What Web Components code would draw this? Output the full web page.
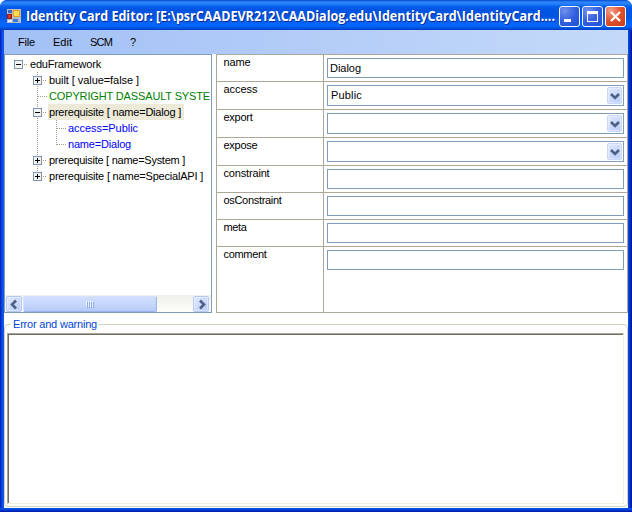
<!DOCTYPE html>
<html lang="en"><head><meta charset="utf-8"><title>Identity Card Editor</title>
<style>html,body{margin:0;width:632px;height:512px;overflow:hidden;background:#fff}</style></head>
<body><card-window></card-window>
<script>
const define=(name,markup,setup)=>customElements.define(name,class extends HTMLElement{
  connectedCallback(){
    if(this.shadowRoot)return;
    const t=document.createElement('template');
    t.innerHTML='<style>*{box-sizing:border-box}:host{box-sizing:border-box}svg{display:block}</style>'+(typeof markup==='function'?markup(this):markup);
    this.attachShadow({mode:'open'}).append(t.content.cloneNode(true));
    if(setup)setup(this);
  }
});
/* A label fitted to a width: by letter spacing, or by horizontal scale when "scale" is set. */
define('fit-label',e=>`<style>:host{display:block;white-space:pre;width:${e.getAttribute('w')}px;flex:none}span{display:inline-block;transform-origin:0 0}</style><span>${e.getAttribute('text')}</span>`,e=>{
  const s=e.shadowRoot.querySelector('span'),w=+e.getAttribute('w'),n=e.getAttribute('text').length,cur=s.getBoundingClientRect().width;
  if(e.hasAttribute('scale'))s.style.transform=`scaleX(${w/cur})`;
  else if(n>1)s.style.letterSpacing=(w+1-cur)/n+'px';
});
define('caption-button',e=>{
  const k=e.getAttribute('kind'),c=k==='close';
  const g={min:'<rect x="5" y="13" width="7" height="3" fill="#fff"/>',
    max:'<path d="M5.500 5v11M15.500 5v11M5 15.500h11" stroke="#fff" fill="none"/><rect x="5" y="5" width="11" height="3" fill="#fff"/>',
    close:'<path d="M6 6l9 9M15 6l-9 9" stroke="#fff" stroke-width="2.300" fill="none"/>'}[k];
  return `<style>:host{display:block;width:21px;height:21px;border:1px solid ${c?'#fff':'#f4f7ff'};border-radius:3px;background:${c?'radial-gradient(circle at 25% 20%,#f0a088,#e0502c 50%,#c83c18)':'radial-gradient(circle at 25% 20%,#7090ec,#3560e0 50%,#2150d4)'}}svg{margin:-1px}</style><svg width="21" height="21">${g}</svg>`;
});
define('title-bar',`<style>
:host{display:flex;height:30px;border-radius:7px 7px 0 0;padding:6px 4px 0 6px;background:linear-gradient(#0848c8 0,#2b85ff 2px,#2a80fa 4px,#0764ee 6px,#0055e3 9px,#0054e2 17px,#0262fa 22px,#0367ff 26px,#0153dd 28px,#003ecc 30px)}
.icon{margin:3px 5px 0 1px;width:14px}
fit-label{font:bold 13.500px/21px "Open Sans","Noto Sans",sans-serif;color:#fff;text-shadow:1px 1px #0a2a90}
.b{display:flex;gap:2px;margin-left:4px}</style>
<svg class="icon" width="14" height="14"><rect width="14" height="14" fill="#b8bcc4"/><rect x="1" y="1" width="4" height="3" fill="#3867c0"/><rect x="0.500" y="5.500" width="4" height="4" fill="#d93120" stroke="#8d1d18"/><rect x="6.500" y="1.500" width="6" height="6" fill="#ffdc54" stroke="#e8a020"/><rect x="1" y="11" width="4" height="2" fill="#e8eef8"/><rect x="6" y="10" width="5" height="3" fill="#3c78d8"/></svg>
<fit-label scale w="529" text="Identity Card Editor: [E:\\psrCAADEVR212\\CAADialog.edu\\IdentityCard\\IdentityCard...."></fit-label>
<div class="b"><caption-button kind="min"></caption-button><caption-button kind="max"></caption-button><caption-button kind="close"></caption-button></div>`);
define('menu-bar',`<style>:host{display:flex;gap:19px;height:24px;padding:4px 14px;background:linear-gradient(90deg,#a2c0f6,#c5daf9)}</style>
<fit-label w="16" text="File"></fit-label><fit-label w="18" text="Edit"></fit-label><fit-label w="21" text="SCM"></fit-label><fit-label w="5" text="?"></fit-label>`);
/* Tree row: "cells" has one letter per indent. p/q = plus box, m/r = minus box, t = tee, l = last, v = line, e = empty */
define('tree-row',e=>{
  const box=(p,top,bot)=>`${top?'<path class="d" d="M9.500 0v4"/>':''}${bot?'<path class="d" d="M9.500 14v2"/>':''}<path class="d" d="M15 8.500h4"/><rect x="5.500" y="4.500" width="8" height="8" rx="1" fill="#f4f2ec" stroke="#7898b5"/><path d="M7 8.500h5${p?'M9.500 6v5':''}" stroke="#000"/>`;
  const g={p:box(1,1,1),q:box(1,1,0),m:box(0,1,1),r:box(0,0,0),t:'<path class="d" d="M9.500 0v16M10 8.500h9"/>',l:'<path class="d" d="M9.500 0v9M10 8.500h9"/>',v:'<path class="d" d="M9.500 0v16"/>',e:''};
  return `<style>:host{display:flex;height:16px}.d{stroke:#a39f90;stroke-dasharray:1 1;fill:none}svg{flex:none}
  fit-label{color:${e.getAttribute('color')||'#000'};padding:0 2px 0 1px;margin-left:1px;box-sizing:content-box;${e.hasAttribute('selected')?'background:#ece9d8;padding-right:4px':''}}</style>${[...e.getAttribute('cells')].map(c=>`<svg width="19" height="16" shape-rendering="crispEdges">${g[c]}</svg>`).join('')}<fit-label w="${e.getAttribute('w')}" text="${e.getAttribute('text')}"></fit-label>`;
});
define('xp-button',e=>{
  const d={left:'M10 4.500l-4 4 4 4',right:'M7 4.500l4 4-4 4',down:'M4 7l4 4 4-4'}[e.getAttribute('dir')],dn=e.getAttribute('dir')==='down';
  return `<style>:host{display:block;width:${dn?15:16}px;height:${dn?17:16}px;border:1px solid ${dn?'#c8d6fa':'#b4c8f4'};border-radius:2px;background:linear-gradient(135deg,#e0e9ff,#b8cbf8);flex:none;box-shadow:inset 0 0 0 1px #ffffff66}svg{margin:-1px}</style><svg width="16" height="17"><path d="${d}" fill="none" stroke="#4d6185" stroke-width="2.600"/></svg>`;
});
define('h-scrollbar',`<style>:host{display:flex;height:17px;padding:1px 1px 0;background:linear-gradient(#f0f0ea,#fefefb)}
.t{width:134px;height:16px;margin:0 36px 0 1px;border:1px solid #98b4ea;border-top-color:#d4e0fc;border-left-color:#d4e0fc;border-radius:2px;background:linear-gradient(#d0dfff,#c4d5fc 60%,#b6caf6);display:flex;justify-content:center;padding-top:4px}</style>
<xp-button dir="left"></xp-button><div class="t"><svg width="9" height="7" shape-rendering="crispEdges"><path d="M.5 0v6M2.500 0v6M4.500 0v6M6.500 0v6" stroke="#eef4ff"/><path d="M1.500 1v6M3.500 1v6M5.500 1v6M7.500 1v6" stroke="#8cabed"/></svg></div><xp-button dir="right"></xp-button>`);
define('tree-panel',`<style>:host{display:flex;flex-direction:column;width:208px;height:259px;border:1px solid #7f9db9;background:#fff}
.rows{flex:1;padding:1px 2px 0 4px;overflow:hidden}</style>
<div class="rows">
<tree-row cells="r" w="70" text="eduFramework"></tree-row>
<tree-row cells="ep" w="89" text="built [ value=false ]"></tree-row>
<tree-row cells="et" color="#008000" w="160" text="COPYRIGHT DASSAULT SYSTE"></tree-row>
<tree-row cells="em" selected w="131" text="prerequisite [ name=Dialog ]"></tree-row>
<tree-row cells="evt" color="#0000ff" w="69" text="access=Public"></tree-row>
<tree-row cells="evl" color="#0000ff" w="62" text="name=Dialog"></tree-row>
<tree-row cells="ep" w="135" text="prerequisite [ name=System ]"></tree-row>
<tree-row cells="eq" w="153" text="prerequisite [ name=SpecialAPI ]"></tree-row>
</div><h-scrollbar></h-scrollbar>`);
define('property-row',e=>{
  const s=e.hasAttribute('select'),v=e.getAttribute('value');
  return `<style>:host{display:grid;grid-template-columns:107px 1fr;border-bottom:1px solid #aca899;height:${s?28:27}px}
:host([last]){height:66px}.k{border-right:1px solid #aca899;padding:0 0 0 6.500px}.k fit-label{margin-top:-1px}.v{padding:3px 3px 0}
.f{height:${s?21:20}px;border:1px solid #7f9db9;background:#fff;display:flex;justify-content:space-between;padding:${s?'1px 1px 0 3px':'1px 2px'}}</style>
<div class="k"><fit-label w="${e.getAttribute('w')}" text="${e.getAttribute('name')}"></fit-label></div><div class="v"><div class="f">${v?`<fit-label w="30" text="${v}"></fit-label>`:'<i></i>'}${s?'<xp-button dir="down"></xp-button>':''}</div></div>`;
});
define('property-grid',`<style>:host{display:block;width:412px;height:259px;border:1px solid #aca899;border-bottom:0;background:#fff}</style>
<property-row name="name" w="26" value="Dialog"></property-row><property-row select name="access" w="33" value="Public"></property-row>
<property-row select name="export" w="28"></property-row><property-row select name="expose" w="33"></property-row>
<property-row name="constraint" w="45"></property-row><property-row name="osConstraint" w="57"></property-row>
<property-row name="meta" w="22"></property-row><property-row last name="comment" w="42"></property-row>`);
define('error-group',`<style>:host{display:block;height:191px}
fieldset{margin:0;min-width:0;height:191px;border:1px solid #d0d0bf;border-radius:4px;padding:0 3px 0 2px}
legend{padding:0 2px 0 3px;margin-left:3px;height:16px;color:#0046d5}
.box{height:171px;margin-top:1px;border:1px solid;border-color:#aca899 #f1efe2 #f1efe2 #aca899;background:#fff;box-shadow:inset 1px 1px #716f64}</style>
<fieldset><legend><fit-label w="83" text="Error and warning"></fit-label></legend><div class="box"></div></fieldset>`);
define('card-window',`<style>:host{display:flex;flex-direction:column;width:632px;height:512px;font:11px/16px "Liberation Sans",Arial,sans-serif;color:#000;border-radius:7px 7px 0 0;background:linear-gradient(90deg,#001ea0 0,#0831d9 1px,#0f5bf0 3px,#0855dd 4px,#0855dd 628px,#0040dc 629px,#0020b0 631px,#001080)}
.c{width:624px;height:478px;margin:0 4px;background:#fff;display:flex;flex-direction:column}
.m{display:flex;gap:4px;margin-bottom:3px}.foot{height:4px;background:linear-gradient(#0855dd,#0040dc 50%,#0010a0)}</style>
<title-bar></title-bar><div class="c"><menu-bar></menu-bar><div class="m"><tree-panel></tree-panel><property-grid></property-grid></div><error-group></error-group></div><div class="foot"></div>`);
</script></body></html>
